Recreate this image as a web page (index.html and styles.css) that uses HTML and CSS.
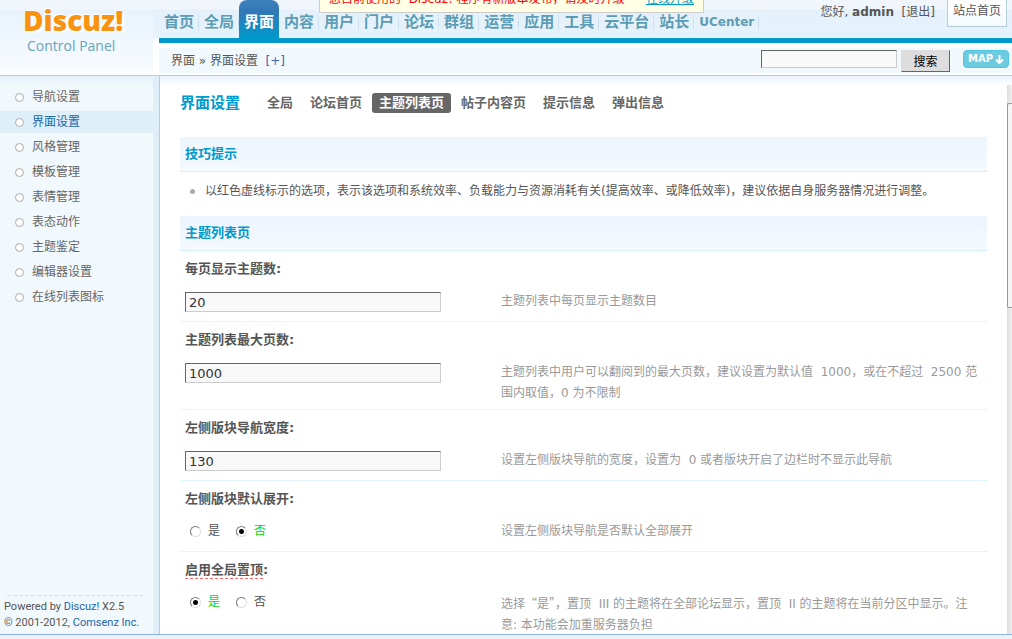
FILE: index.html
```html
<!DOCTYPE html>
<html lang="zh-CN">
<head>
<meta charset="utf-8">
<title>Discuz! Control Panel</title>
<link rel="stylesheet" href="styles.css">
</head>
<body>
<div class="frame">
  <header class="header">
    <a class="logo" href="#"><span class="logo-name">Discuz!</span><span class="logo-sub">Control Panel</span></a>
    <div class="top">
      <div class="top-row">
        <nav class="nav">
          <a href="#">首页</a><a href="#">全局</a><a class="on" href="#">界面</a><a href="#">内容</a><a href="#">用户</a><a href="#">门户</a><a href="#">论坛</a><a href="#">群组</a><a href="#">运营</a><a href="#">应用</a><a href="#">工具</a><a href="#">云平台</a><a href="#">站长</a><a class="latin" href="#">UCenter</a>
        </nav>
        <div class="user">
          <p>您好, <b>admin</b> &nbsp;<a href="#">[退出]</a></p>
          <a class="home" href="#">站点首页</a>
        </div>
      </div>
      <div class="toolbar">
        <p class="crumbs">界面 » 界面设置 &nbsp;<a href="#">[+]</a></p>
        <form class="search">
          <input type="text" aria-label="搜索">
          <button type="button">搜索</button>
          <a class="map" href="#">MAP<svg width="9" height="9" viewBox="0 0 9 9" aria-hidden="true"><path d="M4.500 0v8M1 4.500l3.500 3.500L8 4.500" fill="none" stroke="#fff" stroke-width="2"/></svg></a>
        </form>
      </div>
    </div>
    <p class="notice">您目前使用的 &nbsp;Discuz! 程序有新版本发布，请及时升级<a href="#">在线升级</a></p>
  </header>

  <aside class="side">
    <ul class="menu">
      <li><a href="#">导航设置</a></li>
      <li class="on"><a href="#">界面设置</a></li>
      <li><a href="#">风格管理</a></li>
      <li><a href="#">模板管理</a></li>
      <li><a href="#">表情管理</a></li>
      <li><a href="#">表态动作</a></li>
      <li><a href="#">主题鉴定</a></li>
      <li><a href="#">编辑器设置</a></li>
      <li><a href="#">在线列表图标</a></li>
    </ul>
    <div class="copy">
      <p>Powered by <a href="#">Discuz!</a> X2.5</p>
      <p>© 2001-2012, <a href="#">Comsenz Inc.</a></p>
    </div>
  </aside>

  <main class="main">
    <div class="content">
      <div class="heading">
        <h1>界面设置</h1>
        <nav class="tabs">
          <a href="#">全局</a><a href="#">论坛首页</a><a class="on" href="#">主题列表页</a><a href="#">帖子内容页</a><a href="#">提示信息</a><a href="#">弹出信息</a>
        </nav>
      </div>
      <h2>技巧提示</h2>
      <ul class="tips"><li>以红色虚线标示的选项，表示该选项和系统效率、负载能力与资源消耗有关(提高效率、或降低效率)，建议依据自身服务器情况进行调整。</li></ul>
      <h2>主题列表页</h2>
      <form>
        <div class="row">
          <label class="name" for="per-page">每页显示主题数:</label>
          <div class="field"><input class="text" id="per-page" type="text" value="20"><p>主题列表中每页显示主题数目</p></div>
        </div>
        <div class="row">
          <label class="name" for="max-pages">主题列表最大页数:</label>
          <div class="field"><input class="text" id="max-pages" type="text" value="1000"><p>主题列表中用户可以翻阅到的最大页数，建议设置为默认值 &nbsp;1000，或在不超过 &nbsp;2500 范围内取值，0 为不限制</p></div>
        </div>
        <div class="row">
          <label class="name" for="nav-width">左侧版块导航宽度:</label>
          <div class="field"><input class="text" id="nav-width" type="text" value="130"><p>设置左侧版块导航的宽度，设置为 &nbsp;0 或者版块开启了边栏时不显示此导航</p></div>
        </div>
        <div class="row" role="radiogroup" aria-labelledby="expand">
          <span class="name" id="expand">左侧版块默认展开:</span>
          <div class="field"><div class="radios"><label><input type="radio" name="expand"><span>是</span></label><label><input type="radio" name="expand" checked><span>否</span></label></div><p>设置左侧版块导航是否默认全部展开</p></div>
        </div>
        <div class="row" role="radiogroup" aria-labelledby="sticky">
          <span class="name" id="sticky"><span class="costly">启用全局置顶</span>:</span>
          <div class="field"><div class="radios"><label><input type="radio" name="sticky" checked><span>是</span></label><label><input type="radio" name="sticky"><span>否</span></label></div><p>选择<span class="cjk">“是”</span>，置顶 &nbsp;III 的主题将在全部论坛显示，置顶 &nbsp;II 的主题将在当前分区中显示。注意: 本功能会加重服务器负担</p></div>
        </div>
      </form>
    </div>
    <div class="scrollbar" aria-hidden="true"><div class="thumb"></div></div>
  </main>
  <div class="bottom"></div>
</div>
</body>
</html>
```

FILE: styles.css
```css
* { box-sizing: border-box; }
body, p, ul, h1, h2 { margin: 0; padding: 0; }
ul { list-style: none; }
a { color: inherit; text-decoration: none; }
body {
  color: #555;
  background: #fff;
  font: 12px/20px "DejaVu Sans", "Noto Sans CJK SC", sans-serif;
  overflow: hidden;
}
.frame {
  display: grid;
  grid-template-columns: 160px minmax(0, 1fr);
  grid-template-rows: auto minmax(0, 1fr) auto;
  height: 100vh;
}

/* header */
.header {
  grid-column: 1 / -1;
  position: relative;
  display: grid;
  grid-template-columns: 159px minmax(0, 1fr);
  background: linear-gradient(#f0f6fc 9px, #e4f1fb 10px, #e6f2fb 38px, #fff 39px);
  border-bottom: 1px solid #b5cfd9;
}
.logo {
  display: flex;
  flex-direction: column;
  margin-right: 6px;
  padding: 4px 0 0 23px;
  background: linear-gradient(#f0f6fc 9px, #e8f3fc 10px, #f7fbff 71px, #fff 71px);
  font-family: "Open Sans", "Noto Sans", sans-serif;
}
.logo-name {
  color: #f9930f;
  font-size: 28px;
  line-height: 32px;
  font-weight: 800;
  text-shadow: 1px 1px 0 #fff, -1px -1px 0 #fff, 2px 2px 1px #fff;
}
.logo-sub {
  padding-left: 4px;
  color: #6ba3bb;
  font-size: 14px;
  line-height: 20px;
}
.top { min-width: 0; }
.top-row {
  display: flex;
  justify-content: space-between;
  height: 43px;
  border-bottom: 5px solid #09c;
}
.nav { display: flex; }
.nav a {
  padding: 8px 5px 0 5px;
  min-width: 40px;
  color: #5c9cb4;
  font-size: 15px;
  line-height: 28px;
  font-weight: 700;
  white-space: nowrap;
  background: linear-gradient(#e4f1fb, #c5dbe8, #e4f1fb) right 12px / 1px 22px no-repeat;
}
.nav .on {
  color: #fff;
  border-radius: 8px 8px 0 0;
  background: linear-gradient(#3d80bb, #3178b6 12px, #09c);
}
.nav .latin { font-size: 12px; }
.user { display: flex; gap: 12px; padding-right: 5px; white-space: nowrap; }
.user p { padding-top: 2px; }
.home {
  height: 27px;
  padding: 1px 5px;
  background: linear-gradient(#fff, #f3fafd);
  border: 1px solid #b5cfd9;
  border-top: 0;
}
.toolbar {
  display: flex;
  justify-content: space-between;
  margin-top: 5px;
  margin-bottom: 2px;
  padding: 0 3px 0 12px;
  background: #f2f9fd;
}
.crumbs { padding-top: 1px; line-height: 24px; }
.crumbs a { color: #4361b3; }
.search { display: flex; align-items: flex-start; padding-top: 2px; }
.search input, .text {
  border: 1px solid #ccc;
  border-top-color: #666;
  border-left-color: #666;
  border-radius: 0;
  background: #f9f9f9;
  outline: 0;
}
.search input { width: 136px; height: 18px; }
.search button {
  width: 49px;
  height: 22px;
  margin: 0 13px 0 4px;
  padding: 0;
  border: 1px solid #666;
  border-top-color: #ddd;
  border-left-color: #ddd;
  background: #ddd;
  color: #000;
  font: 12px/18px "Noto Sans CJK SC", sans-serif;
}
.map {
  display: flex;
  align-items: center;
  gap: 2px;
  height: 18px;
  padding: 0 4px;
  border: 1px solid #4fc5e2;
  border-radius: 4px;
  background: #6dcbdf;
  color: #fff;
  font-size: 10px;
  font-weight: 700;
}
.notice {
  position: absolute;
  top: -12px;
  left: 319px;
  width: 385px;
  height: 25px;
  padding: 0 9px;
  display: flex;
  justify-content: space-between;
  border: 1px solid #ccc;
  background: #ffffe5;
  color: #f00;
  white-space: nowrap;
}
.notice a { color: #09c; text-decoration: underline; }

/* sidebar */
.side {
  display: flex;
  flex-direction: column;
  justify-content: space-between;
  border-right: 1px solid #b5cfd9;
  background: linear-gradient(90deg, transparent 153px, #deeffa 153px), linear-gradient(#e4f1fb, #f2f9fd 10px);
}
.menu {
  display: flex;
  flex-direction: column;
  gap: 3px;
  padding-top: 10px;
  color: #666;
}
.menu li { padding-left: 15px; line-height: 22px; }
.menu a { display: flex; align-items: center; gap: 8px; }
.menu a::before {
  content: "";
  width: 7px;
  height: 7px;
  border: 1px solid #aaa;
  border-radius: 50%;
  background: #fff;
}
.menu .on { background: #deeffa; color: #2366a8; }
.copy {
  margin: 0 16px 3px 4px;
  padding-top: 4px;
  font: 11px/16px Roboto, sans-serif;
  white-space: nowrap;
  background: repeating-linear-gradient(90deg, #ddd 0 4px, transparent 4px 6px) 3px 0 / 100% 1px no-repeat;
}
.copy a { color: #2366a8; }

/* main */
.main {
  display: flex;
  overflow: hidden;
  background: linear-gradient(#eaf4fc, #fff 10px);
}
.content { flex: 1; min-width: 0; padding: 16px 20px 0; }
.heading { display: flex; align-items: center; gap: 20px; margin-bottom: 24px; height: 21px; }
h1 { color: #09c; font-size: 15px; line-height: 20px; }
.tabs { display: flex; gap: 3px; color: #666; font-size: 13px; font-weight: 700; }
.tabs a { padding: 0 7px; line-height: 20px; border-radius: 3px; white-space: nowrap; }
.tabs .on { background: #666; color: #fff; }
h2 {
  height: 35px;
  padding-left: 5px;
  border-bottom: 1px dotted #c9e4f5;
  background: linear-gradient(#ecf5fd, #f1f6ff 50%, #f4fafe);
  color: #09c;
  font-size: 13px;
  line-height: 34px;
}
.tips { padding: 8px 5px 14px 10px; }
.tips li { display: flex; align-items: baseline; gap: 10px; line-height: 22px; }
.tips li::before {
  content: "";
  flex: none;
  width: 5px;
  height: 5px;
  border-radius: 50%;
  background: #aaa;
  align-self: center;
}
.row { border-bottom: 1px dotted #d3eafa; }
.row:last-child { border-bottom: 0; }
.name {
  display: block;
  padding-left: 5px;
  font-size: 13px;
  line-height: 36px;
  height: 34px;
  font-weight: 700;
}
.costly { padding-bottom: 1px; border-bottom: 1px dashed #f66; }
.field {
  display: grid;
  grid-template-columns: 256px minmax(0, 1fr);
  column-gap: 60px;
  align-items: start;
  min-height: 36px;
  padding: 6px 8px 5px 5px;
}
.field p { color: #999; line-height: 21px; }
.cjk { font-family: "Noto Sans CJK SC", sans-serif; }
.text {
  width: 100%;
  height: 20px;
  margin-top: 1px;
  padding: 0 3px;
  color: #333;
  font: 13px/18px "DejaVu Sans", sans-serif;
}
.radios { display: flex; gap: 16px; padding-left: 5px; }
.radios label { display: flex; align-items: center; gap: 7px; line-height: 21px; }
.radios input {
  appearance: none;
  width: 11px;
  height: 11px;
  margin: 0;
  border: 1px solid #ddd;
  border-top-color: #777;
  border-left-color: #777;
  border-radius: 50%;
  background: #fff;
}
.radios input:checked { background: radial-gradient(circle, #000 2px, #fff 3px); }
.radios input:checked + span { color: #00dc00; }
.scrollbar {
  width: 5px;
  margin-top: 9px;
  padding-top: 18px;
  background: linear-gradient(90deg, #ddd, #f0f0f0);
}
.thumb {
  height: 205px;
  border: 1px solid #999;
  border-right: 0;
  border-radius: 2px 0 0 2px;
  background: #f5f5f5;
}
.bottom {
  grid-column: 1 / -1;
  height: 5px;
  border-top: 1px solid #8fb2e6;
  background: #eaf2fc;
}
```
